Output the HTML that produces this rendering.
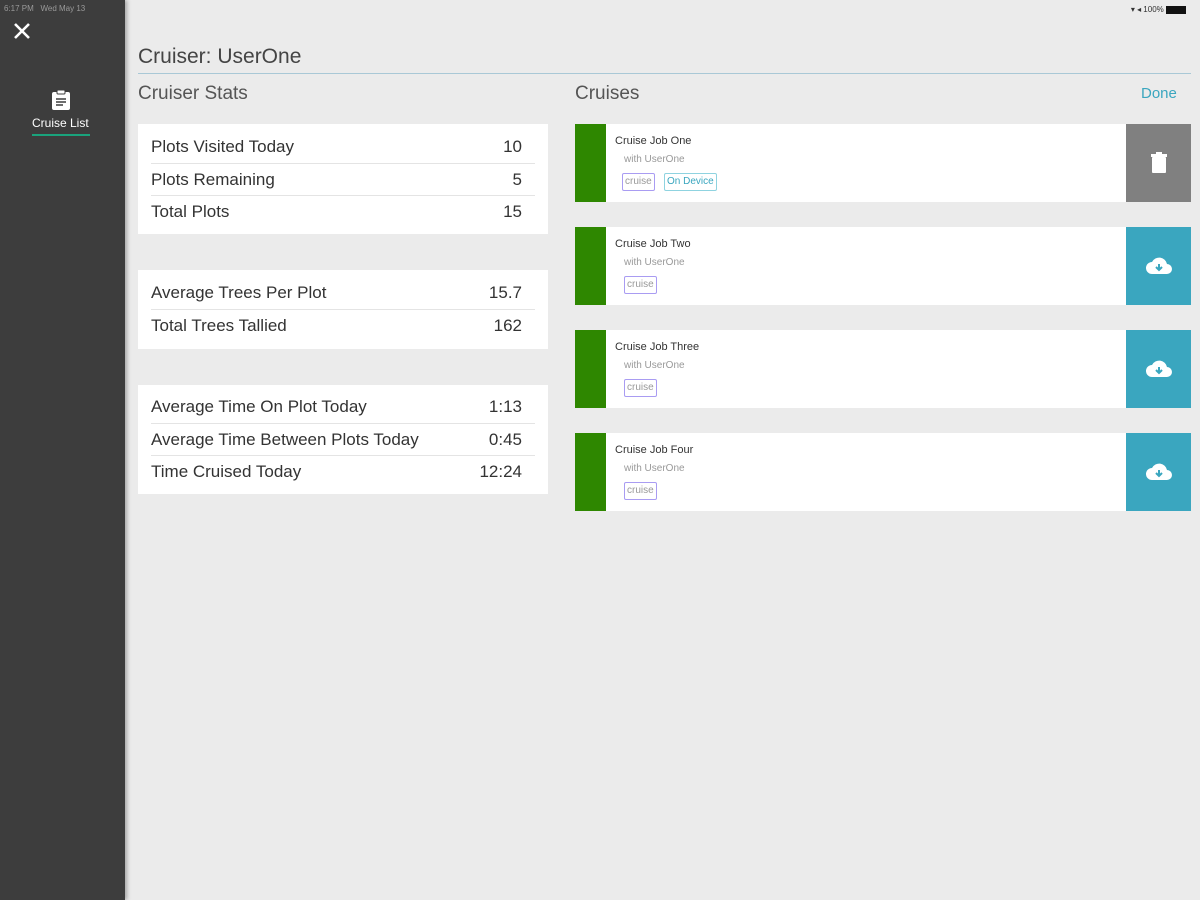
<!DOCTYPE html>
<html><head><meta charset="utf-8"><style>
*{margin:0;padding:0;box-sizing:border-box}
body{width:1200px;height:900px;background:#ebebeb;font-family:"Liberation Sans",sans-serif;position:relative;overflow:hidden}
.side{position:absolute;left:0;top:0;width:125px;height:900px;background:#3d3d3d;box-shadow:2px 0 4px rgba(0,0,0,.3)}
.abs{position:absolute}
.card{position:absolute;left:138px;width:410px;background:#fff}
.row{position:absolute;left:13px;right:13px;height:32px;display:flex;justify-content:space-between;align-items:center;font-size:17px;color:#333;padding-right:13px}
.sep{border-top:1px solid #e4e4e4}
.cr{position:absolute;left:575px;width:616px;height:78px;background:#fff}
.gb{position:absolute;left:0;top:0;width:31px;height:78px;background:#2e8700}
.bt{position:absolute;right:0;top:0;width:65px;height:78px;background:#3aa6bf;display:flex;align-items:center;justify-content:center}
.t{position:absolute;left:40px;top:11px;font-size:11px;color:#333}
.w{position:absolute;left:49px;top:30px;font-size:10px;color:#999}
.tag{position:absolute;top:49px;height:18px;font-size:10px;line-height:16px;padding:0 2px;border:1px solid #a99cf2;color:#999;border-radius:2px}
</style></head><body>
<div class="side">
<div class="abs" style="left:4px;top:4px;font-size:8px;color:#999">6:17 PM &nbsp; Wed May 13</div>
<svg class="abs" style="left:13px;top:22px" width="18" height="18"><path d="M2 2L16 16M16 2L2 16" stroke="#fff" stroke-width="2.6"/></svg>
<svg class="abs" style="left:51px;top:89px" width="20" height="22"><rect x="1" y="3" width="18" height="18" rx="2" fill="#fff"/><rect x="6" y="1" width="8" height="4" rx="1" fill="#fff" stroke="#3d3d3d"/><path d="M5 10h10M5 13h10M5 16h7" stroke="#3d3d3d" stroke-width="1.4"/></svg>
<div class="abs" style="left:32px;top:116px;font-size:12px;color:#fff">Cruise List</div>
<div class="abs" style="left:32px;top:134px;width:58px;height:2px;background:#1aa37c"></div>
</div>
<div class="abs" style="right:14px;top:5px;font-size:8px;color:#333">▾ ◂ 100% <span style="display:inline-block;width:20px;height:8px;background:#111;vertical-align:middle"></span></div>
<div class="abs" style="left:138px;top:45px;font-size:21px;color:#444">Cruiser: UserOne</div>
<div class="abs" style="left:138px;top:73px;width:1053px;height:1px;background:#a9c8d6"></div>
<div class="abs" style="left:138px;top:83px;font-size:19px;color:#555">Cruiser Stats</div>
<div class="abs" style="left:575px;top:83px;font-size:19px;color:#555">Cruises</div>
<div class="abs" style="left:1141px;top:85px;font-size:15px;color:#3aa6bf">Done</div>

<div class="card" style="top:124px;height:110px">
<div class="row" style="top:7px"><span>Plots Visited Today</span><span>10</span></div>
<div class="row sep" style="top:39px"><span>Plots Remaining</span><span>5</span></div>
<div class="row sep" style="top:71px"><span>Total Plots</span><span>15</span></div>
</div>
<div class="card" style="top:270px;height:79px">
<div class="row" style="top:7px"><span>Average Trees Per Plot</span><span>15.7</span></div>
<div class="row sep" style="top:39px"><span>Total Trees Tallied</span><span>162</span></div>
</div>
<div class="card" style="top:385px;height:109px">
<div class="row" style="top:6px"><span>Average Time On Plot Today</span><span>1:13</span></div>
<div class="row sep" style="top:38px"><span>Average Time Between Plots Today</span><span>0:45</span></div>
<div class="row sep" style="top:70px"><span>Time Cruised Today</span><span>12:24</span></div>
</div>

<div class="cr" style="top:124px"><div class="gb"></div><div class="t">Cruise Job One</div><div class="w">with UserOne</div>
<div class="tag" style="left:47px">cruise</div><div class="tag" style="left:89px;border-color:#8fd3e0;color:#3aa6bf">On Device</div>
<div class="bt" style="background:#808080"><svg width="18" height="22"><rect x="1" y="2" width="16" height="3" fill="#fff"/><rect x="6" y="0" width="6" height="3" fill="#fff"/><rect x="2" y="5" width="14" height="16" rx="1" fill="#fff"/></svg></div></div>
<div class="cr" style="top:227px"><div class="gb"></div><div class="t">Cruise Job Two</div><div class="w">with UserOne</div><div class="tag" style="left:49px">cruise</div>
<div class="bt"><svg width="28" height="20"><path d="M7 18a6 6 0 0 1 0-12a8 8 0 0 1 15 2a5 5 0 0 1 0 10z" fill="#fff"/><path d="M14 8v6M11 11l3 3 3-3" stroke="#3aa6bf" stroke-width="2" fill="none"/></svg></div></div>
<div class="cr" style="top:330px"><div class="gb"></div><div class="t">Cruise Job Three</div><div class="w">with UserOne</div><div class="tag" style="left:49px">cruise</div>
<div class="bt"><svg width="28" height="20"><path d="M7 18a6 6 0 0 1 0-12a8 8 0 0 1 15 2a5 5 0 0 1 0 10z" fill="#fff"/><path d="M14 8v6M11 11l3 3 3-3" stroke="#3aa6bf" stroke-width="2" fill="none"/></svg></div></div>
<div class="cr" style="top:433px"><div class="gb"></div><div class="t">Cruise Job Four</div><div class="w">with UserOne</div><div class="tag" style="left:49px">cruise</div>
<div class="bt"><svg width="28" height="20"><path d="M7 18a6 6 0 0 1 0-12a8 8 0 0 1 15 2a5 5 0 0 1 0 10z" fill="#fff"/><path d="M14 8v6M11 11l3 3 3-3" stroke="#3aa6bf" stroke-width="2" fill="none"/></svg></div></div>
</body></html>
